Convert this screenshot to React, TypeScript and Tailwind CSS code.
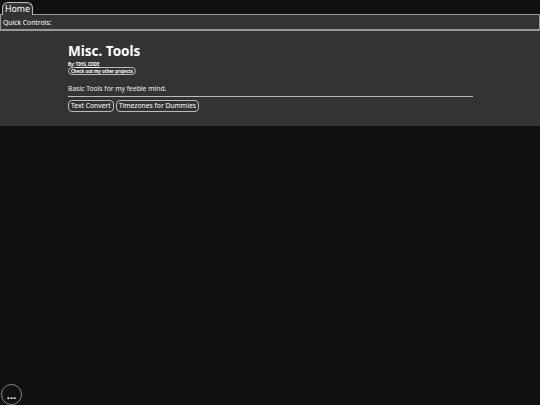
export default function App() {
  return (
    <div className="min-h-[405px] h-[405px] overflow-hidden bg-[#111111] text-white font-['Noto_Sans',sans-serif] relative">
      <nav className="h-[14px] px-[2px] pt-[2px] flex">
        <button className="h-[13px] px-[2px] border border-[#bbbbbb] border-b-0 rounded-t-[6px] bg-[#333333] text-[8.8px] leading-[12px]">
          Home
        </button>
      </nav>
      <div className="h-[17px] bg-[#333333] border border-b-2 border-[#999999] px-[2px] text-[6.75px] leading-[13px] flex items-center">
        Quick Controls:
      </div>
      <header className="h-[95px] bg-[#333333] px-[68px] pt-[11px]">
        <h1 className="text-[13.5px] leading-[19px] font-bold">Misc. Tools</h1>
        <p className="text-[4.4px] leading-[5px] mt-[1px] font-bold">
          By: <a className="underline">TIHS_CODE</a>
        </p>
        <button className="block h-[8px] px-[2px] rounded-[5px] border border-[#bbbbbb] text-[4.4px] leading-[6px] font-bold">
          Check out my other projects
        </button>
        <p className="text-[6.75px] leading-[10px] mt-[9px] text-[#eeeeee]">Basic Tools for my feeble mind.</p>
        <hr className="w-[405px] mt-[2px] border-t border-[#bbbbbb]" />
        <div className="flex gap-[2px] mt-[3px]">
          <button className="h-[12px] px-[2px] rounded-[4px] border border-[#bbbbbb] text-[6.75px] leading-[10px]">
            Text Convert
          </button>
          <button className="h-[12px] px-[2px] rounded-[4px] border border-[#bbbbbb] text-[6.75px] leading-[10px]">
            Timezones for Dummies
          </button>
        </div>
      </header>
      <button className="absolute left-[1px] bottom-[0px] w-[21px] h-[21px] rounded-full border border-[#888888] bg-[#111111] text-[11px] leading-[20px] font-bold">
        ...
      </button>
    </div>
  );
}
